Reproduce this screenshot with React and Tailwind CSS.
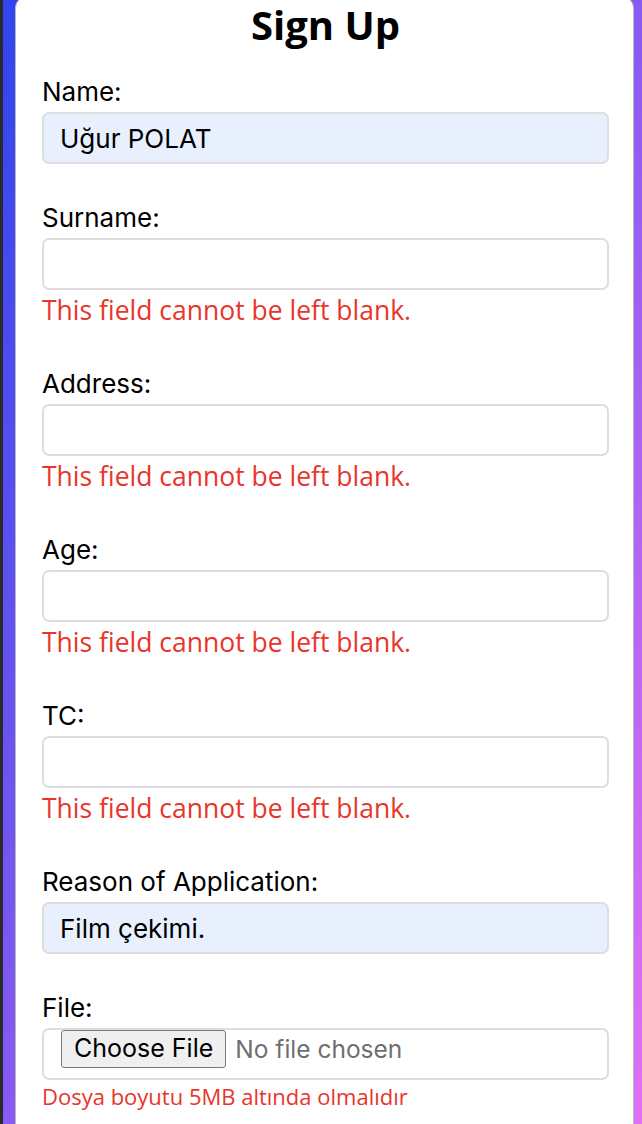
import React from "react";

const label = "block text-[26px] leading-[30px] text-black [font-family:Inter,'Liberation_Sans',sans-serif]";
const inputCls =
  "mt-[5px] h-[52px] w-full rounded-[7px] border-2 border-[#dedede] px-4 text-[26px] text-black outline-none [font-family:Inter,'Liberation_Sans',sans-serif]";
const errCls = "mt-[2px] text-[26.5px] leading-[36px] text-[#e8352b] [font-family:'Open_Sans',sans-serif]";

function Field({ name, value, error, filled }) {
  return (
    <div className={error ? "mb-[41px]" : "mb-[39px]"}>
      <label className={label}>{name}</label>
      <input
        readOnly
        value={value || ""}
        className={inputCls + (filled ? " bg-[#e8f0fe]" : " bg-white")}
      />
      {error && <p className={errCls}>This field cannot be left blank.</p>}
    </div>
  );
}

export default function App() {
  return (
    <div className="flex h-[1124px] w-[642px] overflow-hidden bg-[linear-gradient(to_bottom_right,#2f45ef,#e070f4)]">
      <div className="w-[3px] shrink-0 bg-[#2a2a2d]" />
      <div className="ml-[12px] -mt-[4px] h-[1200px] w-[619px] shrink-0 rounded-[12px] border border-[#b8b8b8] bg-white pl-[26px] pr-[24px] pt-[4px]">
        <h1 className="mb-[28px] text-center text-[40px] font-bold leading-[48px] text-black [font-family:'Open_Sans',sans-serif]">
          Sign Up
        </h1>
        <Field name="Name:" value="Uğur POLAT" filled />
        <Field name="Surname:" error />
        <Field name="Address:" error />
        <Field name="Age:" error />
        <Field name="TC:" error />
        <Field name="Reason of Application:" value="Film çekimi." filled />
        <div>
          <label className={label}>File:</label>
          <div className="mt-[5px] flex h-[52px] w-full items-start rounded-[7px] border-2 border-[#dedede] bg-white pl-[17px] [font-family:Inter,'Liberation_Sans',sans-serif]">
            <span className="flex h-[38px] items-center rounded-[3px] border border-[#7a7a7a] bg-[#efefef] px-[12px] text-[25px] text-black">
              Choose File
            </span>
            <span className="ml-[9px] flex h-[38px] items-center text-[24.5px] text-[#6f6f6f]">No file chosen</span>
          </div>
          <p className="mt-[1px] text-[22px] leading-[30px] text-[#e8352b] [font-family:'Open_Sans',sans-serif]">
            Dosya boyutu 5MB altında olmalıdır
          </p>
        </div>
      </div>
    </div>
  );
}
